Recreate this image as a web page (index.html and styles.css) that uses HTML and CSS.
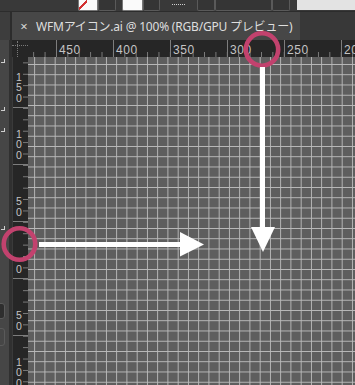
FILE: index.html
```html
<!DOCTYPE html>
<html lang="ja">
<head>
  <meta charset="UTF-8">
  <meta name="viewport" content="width=device-width, initial-scale=1.0">
  <title>WFMアイコン.ai @ 100%</title>
  <link rel="stylesheet" href="styles.css">
</head>
<body>
  <div class="app">
    <div class="topbar">
      <div class="ctl swatch-none"></div>
      <div class="ctl ctl-dark w18"></div>
      <div class="ctl swatch-white"></div>
      <div class="ctl ctl-dark w17"></div>
      <div class="dots"></div>
      <div class="ctl ctl-dark w18"></div>
      <div class="ctl ctl-dark w57"></div>
      <div class="ctl ctl-dark w18"></div>
      <div class="light-area"></div>
    </div>

    <div class="tabbar">
      <div class="tab-stub"></div>
      <div class="tab">
        <span class="tab-close">×</span>
        <span class="tab-title">WFMアイコン.ai @ 100% (RGB/GPU プレビュー)</span>
      </div>
    </div>

    <div class="workspace">
      <div class="toolstrip">
        <span class="tick-mark m1"></span>
        <span class="tick-mark m2"></span>
        <span class="tick-mark m3"></span>
        <span class="tick-mark m4"></span>
        <span class="tool-box b1"></span>
        <span class="tool-box b2"></span>
      </div>

      <div class="rulers">
        <div class="corner"></div>
        <div class="ruler-h">
          <div class="h-cell first"></div>
          <div class="h-cell">450</div>
          <div class="h-cell">400</div>
          <div class="h-cell">350</div>
          <div class="h-cell">300</div>
          <div class="h-cell">250</div>
          <div class="h-cell">200</div>
        </div>
        <div class="ruler-v">
          <div class="v-cell first"><span>1</span><span>5</span><span>0</span></div>
          <div class="v-cell"><span>1</span><span>0</span><span>0</span></div>
          <div class="v-cell"><span>5</span><span>0</span></div>
          <div class="v-cell"><span>0</span></div>
          <div class="v-cell"><span>5</span><span>0</span></div>
          <div class="v-cell"><span>1</span><span>0</span><span>0</span></div>
        </div>
        <div class="canvas"></div>
      </div>
    </div>

    <!-- annotation marks drawn over the artboard -->
    <svg class="marks" width="355" height="385" viewBox="0 0 355 385">
      <circle cx="262" cy="49.5" r="16.2" fill="none" stroke="#c2426e" stroke-width="4.6"/>
      <circle cx="19.5" cy="244" r="15.8" fill="none" stroke="#c2426e" stroke-width="4.6"/>
      <rect x="39" y="242" width="142" height="5" fill="#fff"/>
      <polygon points="180,232 204,244.5 180,256.5" fill="#fff"/>
      <rect x="260" y="67" width="5" height="161" fill="#fff"/>
      <polygon points="251,227 275,227 263,252" fill="#fff"/>
    </svg>
  </div>
</body>
</html>
```

FILE: styles.css
```css
html, body {
  margin: 0;
  padding: 0;
}

body {
  width: 355px;
  height: 385px;
  overflow: hidden;
  background: #3a3a3a;
  font-family: "Noto Sans", "Noto Sans CJK JP", sans-serif;
}

.app {
  position: relative;
  width: 355px;
  height: 385px;
  display: flex;
  flex-direction: column;
  overflow: hidden;
}

/* control bar */
.topbar {
  height: 12px;
  flex: none;
  display: flex;
  align-items: flex-start;
  padding-left: 78px;
  background: #393939;
  border-bottom: 1px solid #2c2c2c;
  box-sizing: border-box;
}

.ctl {
  height: 11px;
  box-sizing: border-box;
  border-radius: 0 0 2px 2px;
}

.ctl-dark {
  background: #353535;
  border: 1px solid #5a5a5a;
  border-top: none;
}

.w18 { width: 18px; }
.w17 { width: 17px; }
.w57 { width: 57px; }

.swatch-none {
  width: 20px;
  background:
    linear-gradient(135deg, transparent 40%, #d23030 40% 55%, transparent 55%) 0 0 / 8px 11px no-repeat,
    #fafafa;
  border: 1px solid #777;
  border-top: none;
}

.swatch-white {
  width: 21px;
  margin-left: 6px;
  background: #fafafa;
  border: 1px solid #777;
  border-top: none;
}

.dots {
  width: 13px;
  height: 1px;
  margin: 4px 12px 0;
  border-top: 1px dotted #cfcfcf;
}

.light-area {
  flex: 1;
  height: 10px;
  margin-left: 7px;
  background: #e3e3e3;
}

/* document tab */
.tabbar {
  height: 28px;
  flex: none;
  display: flex;
  background: #383838;
}

.tab-stub {
  width: 10px;
  background: #3d3d3d;
  border-right: 2px solid #2c2c2c;
}

.tab {
  width: 288px;
  display: flex;
  align-items: center;
  background: #474747;
  color: #dedede;
  font-size: 12px;
  white-space: nowrap;
}

.tab-close {
  width: 24px;
  text-align: center;
  font-size: 13px;
  color: #d8d8d8;
}

.tab-title {
  letter-spacing: -0.2px;
}

/* work area */
.workspace {
  flex: 1;
  display: flex;
  min-height: 0;
}

.toolstrip {
  position: relative;
  width: 9px;
  flex: none;
  background: #464646;
  border-right: 3px solid #303030;
}

.tick-mark {
  position: absolute;
  left: 1px;
  width: 3px;
  height: 3px;
  border-right: 1px solid #cfcfcf;
  border-bottom: 1px solid #cfcfcf;
}

.m1 { top: 19px; }
.m2 { top: 67px; }
.m3 { top: 88px; }
.m4 { top: 186px; }

.tool-box {
  position: absolute;
  left: -3px;
  width: 6px;
  border: 1px solid #5a5a5a;
  border-radius: 3px;
}

.b1 { top: 263px; height: 14px; background: #2e2e2e; }
.b2 { top: 288px; height: 16px; }

.rulers {
  flex: 1;
  display: grid;
  grid-template-columns: 16px 1fr;
  grid-template-rows: 17px 1fr;
  background: #262626;
  font-family: "Liberation Sans", Arial, sans-serif;
  color: #c4c4c4;
  min-width: 0;
}

.corner {
  position: relative;
  margin-top: 5px;
  border-top: 1px dotted #7a7a7a;
  background: #262626;
}

.corner::after {
  content: "";
  position: absolute;
  left: 5px;
  top: -5px;
  height: 16px;
  border-left: 1px dotted #7a7a7a;
}

.ruler-h {
  display: flex;
  overflow: hidden;
  background:
    linear-gradient(90deg, #7d7d7d 1px, transparent 1px) 5.2px 100% / 11.4px 5px repeat-x,
    #262626;
}

.h-cell {
  flex: none;
  width: 57px;
  box-sizing: border-box;
  border-left: 1px solid #7d7d7d;
  padding: 5px 0 0 2px;
  font-size: 12px;
  line-height: 10px;
  letter-spacing: 0.6px;
}

.h-cell.first {
  margin-left: -29px;
}

.ruler-v {
  display: flex;
  flex-direction: column;
  overflow: hidden;
  border-left: 1px solid #3a3a3a;
  background:
    linear-gradient(#7d7d7d 1px, transparent 1px) 100% 5.4px / 5px 11.4px repeat-y,
    #262626;
}

.v-cell {
  flex: none;
  height: 57px;
  box-sizing: border-box;
  border-bottom: 1px solid #7d7d7d;
  display: flex;
  flex-direction: column;
  justify-content: flex-end;
  padding: 0 5px 4px 2px;
  font-size: 10.5px;
  line-height: 10.5px;
  text-align: center;
}

.v-cell.first {
  margin-top: -6px;
}

.canvas {
  background:
    linear-gradient(90deg, #bababa 1px, transparent 1px) 6.2px 0 / 10.26px 100%,
    linear-gradient(#bababa 1px, transparent 1px) 0 7px / 100% 10.26px,
    #5e5e5e;
}

.marks {
  position: absolute;
  top: 0;
  left: 0;
  pointer-events: none;
}
```
